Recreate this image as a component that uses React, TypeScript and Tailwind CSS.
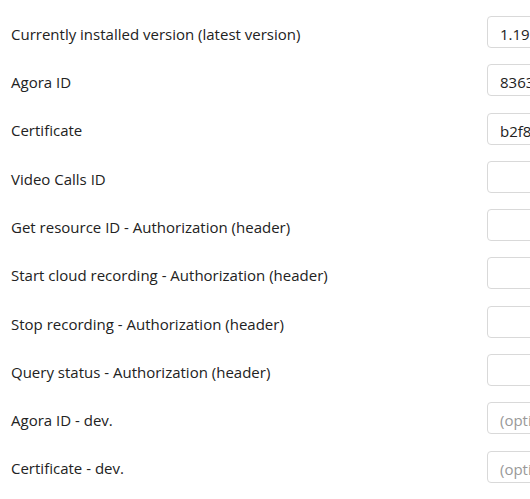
import React from "react";

const rows: { label: string; value?: string; placeholder?: string }[] = [
  { label: "Currently installed version (latest version)", value: "1.19.0" },
  { label: "Agora ID", value: "83631f2a9c4e4b7d" },
  { label: "Certificate", value: "b2f8c71e0d9a4f33" },
  { label: "Video Calls ID" },
  { label: "Get resource ID - Authorization (header)" },
  { label: "Start cloud recording - Authorization (header)" },
  { label: "Stop recording - Authorization (header)" },
  { label: "Query status - Authorization (header)" },
  { label: "Agora ID - dev.", placeholder: "(optional)" },
  { label: "Certificate - dev.", placeholder: "(optional)" },
];

export default function App() {
  return (
    <div
      className="w-[530px] h-[499px] overflow-hidden bg-white pt-[16px]"
      style={{ fontFamily: '"Open Sans", sans-serif' }}
    >
      <div className="flex flex-col gap-[16.3px]">
        {rows.map((r) => (
          <div key={r.label} className="flex items-center h-[32px]">
            <div className="w-[487px] shrink-0 pl-[11px] mt-[4px] text-[15px] text-[#222]">
              {r.label}
            </div>
            <input
              readOnly
              defaultValue={r.value}
              placeholder={r.placeholder}
              className="w-[300px] shrink-0 h-[32px] border border-[#d9d9d9] rounded-[4px] pl-[12px] pr-[12px] pt-[4px] text-[15px] text-[#222] placeholder:text-[#999] outline-none"
              style={{ fontFamily: '"Open Sans", sans-serif' }}
            />
          </div>
        ))}
      </div>
    </div>
  );
}
